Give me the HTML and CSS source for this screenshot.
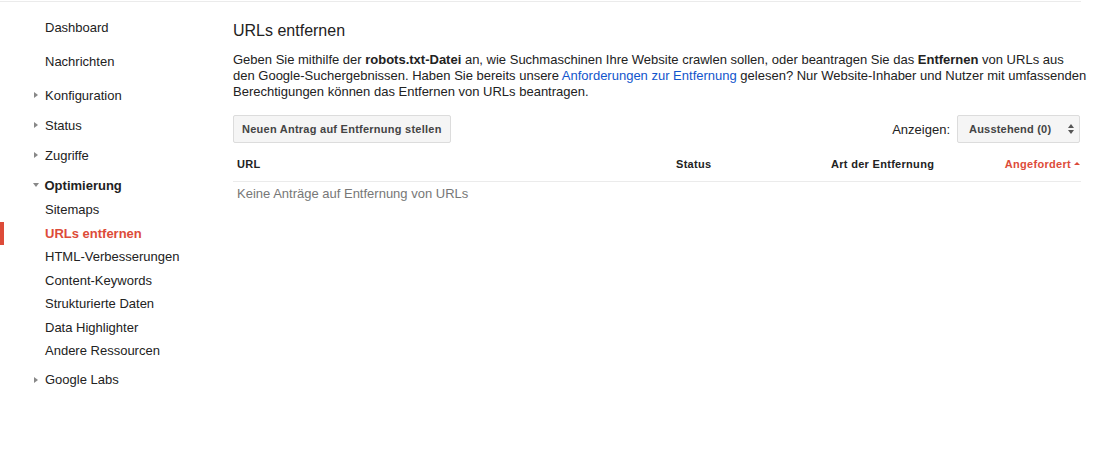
FILE: index.html
```html
<!DOCTYPE html>
<html lang="de">
<head>
<meta charset="utf-8">
<title>URLs entfernen</title>
<link rel="stylesheet" href="styles.css">
</head>
<body>
<div class="page">
  <nav class="sidebar">
    <a class="nav-top">Dashboard</a>
    <a class="nav-top">Nachrichten</a>
    <a class="nav-section first"><span class="tri-right"></span>Konfiguration</a>
    <a class="nav-section"><span class="tri-right"></span>Status</a>
    <a class="nav-section"><span class="tri-right"></span>Zugriffe</a>
    <div class="nav-open"><span class="tri-down"></span>Optimierung</div>
    <ul class="sub">
      <li>Sitemaps</li>
      <li class="active">URLs entfernen</li>
      <li>HTML-Verbesserungen</li>
      <li>Content-Keywords</li>
      <li>Strukturierte Daten</li>
      <li>Data Highlighter</li>
      <li>Andere Ressourcen</li>
    </ul>
    <a class="nav-section labs"><span class="tri-right"></span>Google Labs</a>
  </nav>
  <main class="main">
    <h1 class="title">URLs entfernen</h1>
    <p class="intro">Geben Sie mithilfe der <b>robots.txt-Datei</b> an, wie Suchmaschinen Ihre Website crawlen sollen, oder beantragen Sie das <b>Entfernen</b> von URLs aus<br>den Google-Suchergebnissen. Haben Sie bereits unsere <a class="link">Anforderungen zur Entfernung</a> gelesen? Nur Website-Inhaber und Nutzer mit umfassenden<br>Berechtigungen können das Entfernen von URLs beantragen.</p>
    <div class="toolbar">
      <button class="btn">Neuen Antrag auf Entfernung stellen</button>
      <div class="filter">
        <span class="filter-label">Anzeigen:</span>
        <div class="select">Ausstehend (0)<span class="updown"><span class="up"></span><span class="down"></span></span></div>
      </div>
    </div>
    <div class="table-head">
      <div class="th">URL</div>
      <div class="th">Status</div>
      <div class="th">Art der Entfernung</div>
      <div class="th sorted">Angefordert<span class="sort-up"></span></div>
    </div>
    <div class="empty">Keine Anträge auf Entfernung von URLs</div>
  </main>
</div>
</body>
</html>
```
FILE: styles.css
```css
html, body {
  margin: 0;
  padding: 0;
  background: #fff;
}
body {
  font-family: "Liberation Sans", Arial, sans-serif;
  font-size: 13px;
  color: #222;
}
.page {
  display: flex;
  width: 1081px;
  margin-top: 1px;
  border-top: 1px solid #ebebeb;
}
.sidebar {
  width: 233px;
  flex: none;
  padding-top: 9px;
  display: flex;
  flex-direction: column;
}
.nav-top {
  display: block;
  height: 34px;
  line-height: 34px;
  padding-left: 45px;
  color: #222;
}
.nav-section {
  display: flex;
  align-items: center;
  height: 30px;
  padding-left: 34px;
  color: #222;
}
.nav-section.first { margin-top: 1px; }
.nav-section.labs { margin-top: 2px; }
.tri-right {
  width: 0;
  height: 0;
  border-top: 3.5px solid transparent;
  border-bottom: 3.5px solid transparent;
  border-left: 4px solid #888;
  margin-right: 7px;
}
.nav-open {
  display: flex;
  align-items: center;
  height: 24px;
  margin-top: 3px;
  padding-left: 32px;
  font-weight: bold;
  color: #222;
}
.tri-down {
  width: 0;
  height: 0;
  border-left: 3.5px solid transparent;
  border-right: 3.5px solid transparent;
  border-top: 4px solid #888;
  margin-right: 6px;
  margin-left: 0.5px;
}
.sub {
  list-style: none;
  margin: 1px 0 0;
  padding: 0;
}
.sub li {
  height: 23.5px;
  line-height: 23.5px;
  padding-left: 45px;
}
.sub li.active {
  color: #dd4b39;
  font-weight: bold;
  border-left: 4px solid #dd4b39;
  padding-left: 41px;
}
.main {
  width: 848px;
  flex: none;
}
.title {
  margin: 19px 0 0;
  font-size: 16px;
  font-weight: normal;
  line-height: 20px;
  color: #222;
}
.intro {
  margin: 11px 0 0;
  width: 880px;
  white-space: nowrap;
  line-height: 16px;
}
.link {
  color: #1155cc;
  text-decoration: none;
}
.toolbar {
  display: flex;
  justify-content: space-between;
  align-items: center;
  margin-top: 15px;
}
.btn {
  height: 28px;
  padding: 0 8px;
  background: #f5f5f5;
  border: 1px solid #dcdcdc;
  border-radius: 2px;
  font-family: "Liberation Sans", Arial, sans-serif;
  font-size: 11px;
  font-weight: bold;
  letter-spacing: 0.25px;
  color: #444;
}
.filter {
  display: flex;
  align-items: center;
  gap: 7px;
  margin-right: 1px;
}
.filter-label {
  color: #222;
}
.select {
  display: flex;
  align-items: center;
  box-sizing: border-box;
  height: 28px;
  width: 123px;
  padding-left: 11px;
  background: #f5f5f5;
  border: 1px solid #dcdcdc;
  border-radius: 2px;
  font-size: 11px;
  font-weight: bold;
  letter-spacing: 0.2px;
  color: #444;
}
.updown {
  display: flex;
  flex-direction: column;
  gap: 2px;
  margin-left: auto;
  margin-right: 5px;
}
.up {
  width: 0;
  height: 0;
  border-left: 3.5px solid transparent;
  border-right: 3.5px solid transparent;
  border-bottom: 4px solid #555;
}
.down {
  width: 0;
  height: 0;
  border-left: 3.5px solid transparent;
  border-right: 3.5px solid transparent;
  border-top: 4px solid #555;
}
.table-head {
  display: grid;
  grid-template-columns: 439px 155px 1fr auto;
  margin-top: 12px;
  height: 26px;
  border-bottom: 1px solid #ebebeb;
  font-size: 11px;
  font-weight: bold;
  letter-spacing: 0.3px;
  color: #222;
  line-height: 14px;
}
.th {
  padding-left: 4px;
  padding-top: 2px;
}
.th.sorted {
  color: #dd4b39;
  display: flex;
  align-items: flex-start;
  padding-right: 1px;
}
.sort-up {
  width: 0;
  height: 0;
  border-left: 3px solid transparent;
  border-right: 3px solid transparent;
  border-bottom: 3px solid #dd4b39;
  margin: 5px 0 0 3px;
}
.empty {
  padding: 4px 4px 0;
  line-height: 16px;
  color: #777;
}
```
